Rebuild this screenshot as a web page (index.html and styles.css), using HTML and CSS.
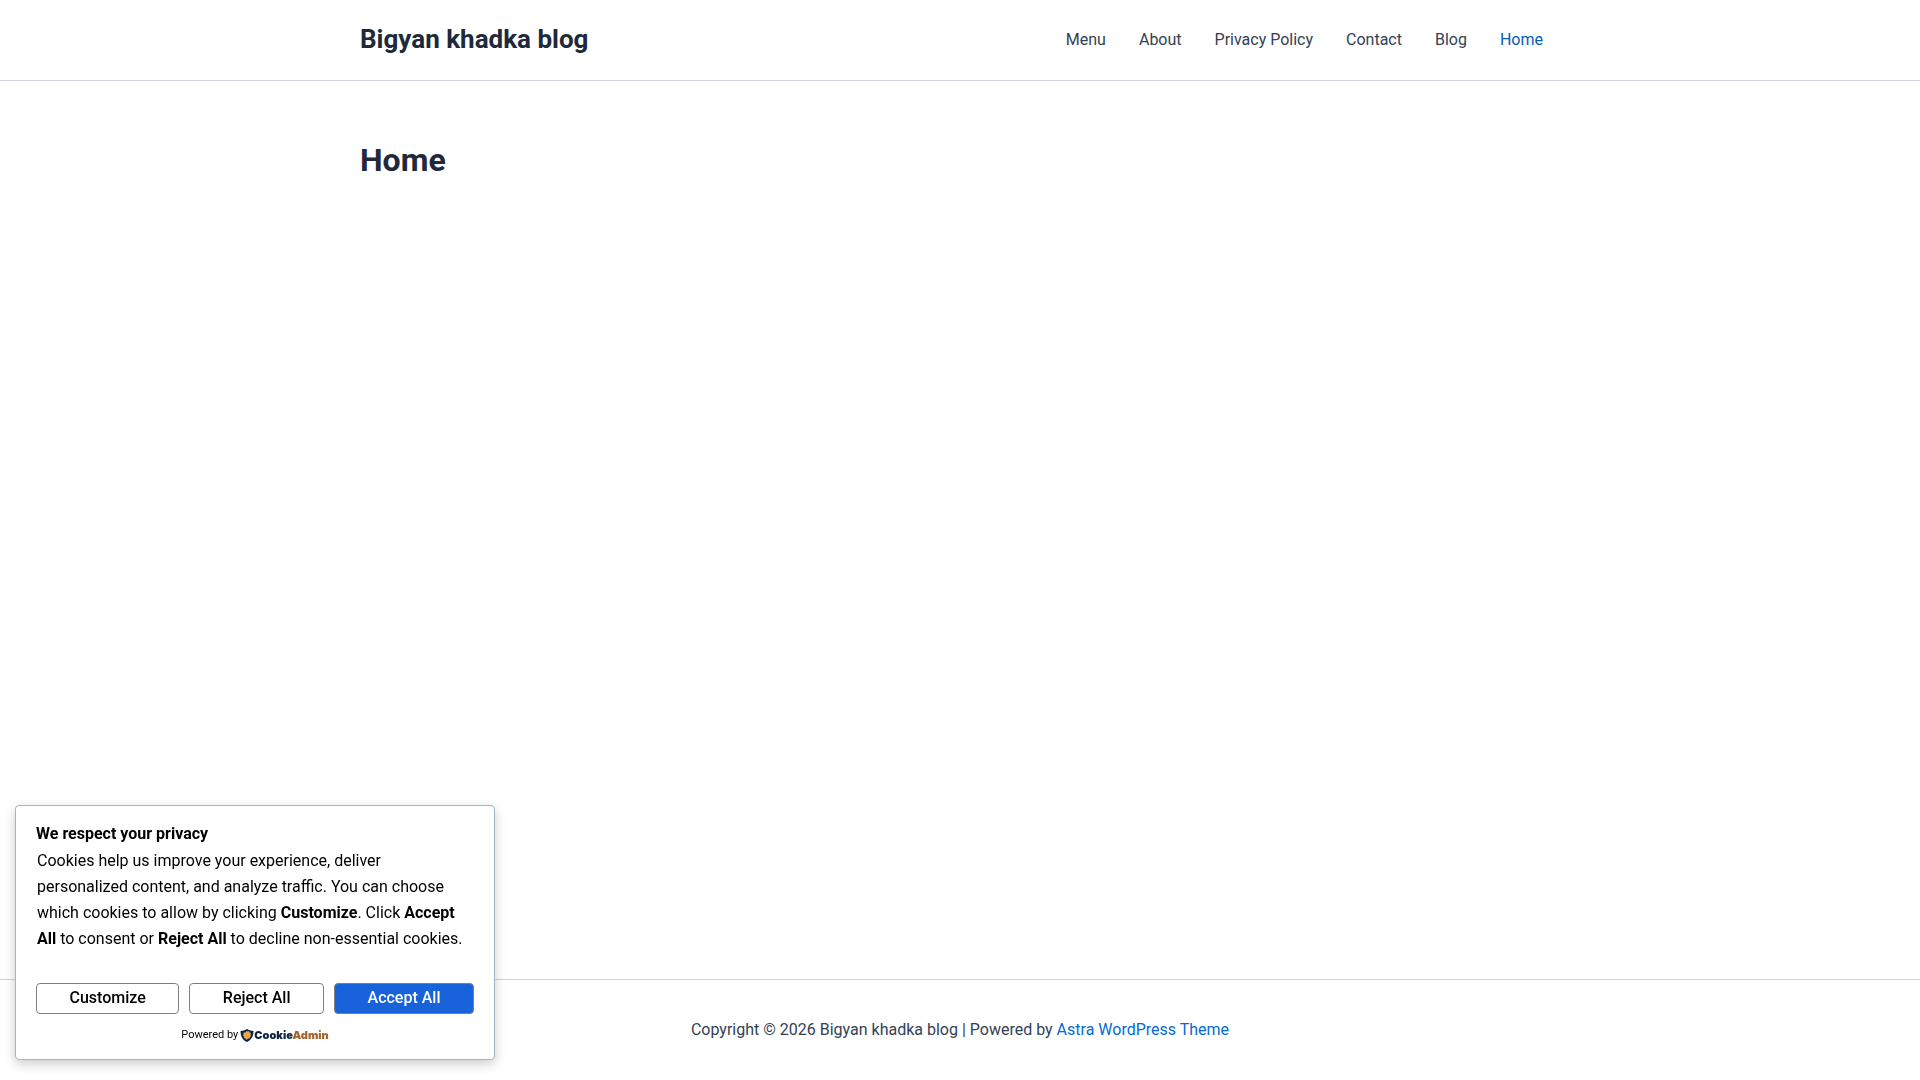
FILE: index.html
```html
<!DOCTYPE html>
<html lang="en">
<head>
    <meta charset="UTF-8">
    <meta name="viewport" content="width=device-width, initial-scale=1.0">
    <title>Home - Bigyan khadka blog</title>
    <link rel="stylesheet" href="styles.css">
</head>
<body>
    <header class="site-header">
        <div class="container header-row">
            <a class="site-title" href="#">Bigyan khadka blog</a>
            <nav class="main-nav">
                <a href="#">Menu</a>
                <a href="#">About</a>
                <a href="#">Privacy Policy</a>
                <a href="#">Contact</a>
                <a href="#">Blog</a>
                <a class="current" href="#">Home</a>
            </nav>
        </div>
    </header>

    <main class="container content">
        <h1>Home</h1>
    </main>

    <footer class="site-footer">
        <p>Copyright © 2026 Bigyan khadka blog | Powered by <a href="#">Astra WordPress Theme</a></p>
    </footer>

    <section class="cookie-box" aria-labelledby="cookie-title">
        <h2 id="cookie-title">We respect your privacy</h2>
        <p class="cookie-text">Cookies help us improve your experience, deliver personalized content, and analyze traffic. You can choose which cookies to allow by clicking <strong>Customize</strong>. Click <strong>Accept All</strong> to consent or <strong>Reject All</strong> to decline non-essential cookies.</p>
        <div class="cookie-buttons">
            <button type="button">Customize</button>
            <button type="button">Reject All</button>
            <button type="button" class="accept">Accept All</button>
        </div>
        <div class="cookie-powered">
            <span>Powered by</span>
            <a class="cookie-brand" href="#">
                <svg width="14" height="13" viewBox="0 0 28 26" aria-hidden="true">
                    <path fill="#0b2440" d="M14 0C18 2.500 22 3.500 27 4C27 14 23 22 14 26C5 22 1 14 1 4C6 3.500 10 2.500 14 0Z"/>
                    <path fill="#efa84a" d="M13 4L16 5L18 4L19 7L22 8L21 11L22 14L20 16L19 19L16 19L13 22L11 19L8 18L8 15L6 13L7 10L7 7L11 7Z"/>
                    <circle fill="#d8923a" cx="12" cy="10" r="1"/>
                    <circle fill="#d8923a" cx="17" cy="12" r="1"/>
                    <circle fill="#d8923a" cx="13" cy="16" r="1"/>
                </svg>
                <span class="brand-name">Cookie<span>Admin</span></span>
            </a>
        </div>
    </section>
</body>
</html>
```

FILE: styles.css
```css
* {
    margin: 0;
    padding: 0;
    box-sizing: border-box;
}

body {
    display: flex;
    flex-direction: column;
    min-height: 100vh;
    font-family: Roboto, sans-serif;
    font-size: 16px;
    line-height: 26px;
    color: #334155;
    background-color: #fff;
}

a {
    color: #046bd2;
    text-decoration: none;
}

.container {
    width: 100%;
    max-width: 1240px;
    margin: 0 auto;
    padding: 0 20px;
}

.site-header {
    border-bottom: 1px solid #d0d5e0;
}

.header-row {
    display: flex;
    justify-content: space-between;
    align-items: center;
    min-height: 80px;
}

.site-title {
    padding-bottom: 2px;
    font-size: 26px;
    font-weight: 700;
    color: #1e293b;
}

.main-nav {
    display: flex;
    flex-wrap: wrap;
    gap: 1px;
    padding-right: 1px;
}

.main-nav a {
    padding: 0 16px;
    color: #334155;
}

.main-nav a:hover,
.main-nav .current {
    color: #045cb4;
}

.content {
    flex: 1;
    padding-top: 59px;
}

.content h1 {
    font-size: 32px;
    line-height: 40px;
    font-weight: 700;
    color: #1e293b;
}

.site-footer {
    padding: 37px 20px;
    border-top: 1px solid #d1d5db;
    text-align: center;
}

/* cookie consent */
.cookie-box {
    position: fixed;
    left: 15px;
    bottom: 20px;
    width: 480px;
    max-width: calc(100% - 30px);
    padding: 16px 20px;
    color: #000;
    background-color: #fff;
    border: 1px solid #a3b4c4;
    border-radius: 4px;
    box-shadow: 0 4px 12px rgba(0, 0, 0, 0.2);
}

.cookie-box h2 {
    margin-bottom: 2px;
    font-size: 16px;
    line-height: 24px;
    font-weight: 700;
}

.cookie-text {
    padding: 0 1px;
}

.cookie-buttons {
    display: flex;
    gap: 10px;
    margin-top: 31px;
}

.cookie-buttons button {
    flex: 1 1 auto;
    height: 31px;
    padding-bottom: 2px;
    font-family: inherit;
    font-size: 16px;
    font-weight: 500;
    color: #000;
    background-color: #fff;
    border: 1px solid #808080;
    border-radius: 4px;
    cursor: pointer;
}

.cookie-buttons .accept {
    color: #fff;
    background-color: #1863dc;
}

.cookie-powered {
    display: flex;
    justify-content: center;
    align-items: center;
    gap: 2px;
    margin-top: 13px;
    font-size: 11px;
    line-height: 16px;
}

.cookie-brand {
    display: flex;
    align-items: center;
}

.brand-name {
    font-family: Inter, sans-serif;
    font-size: 11px;
    font-weight: 900;
    color: #0b2440;
}

.brand-name span {
    color: #a5652a;
}
```
